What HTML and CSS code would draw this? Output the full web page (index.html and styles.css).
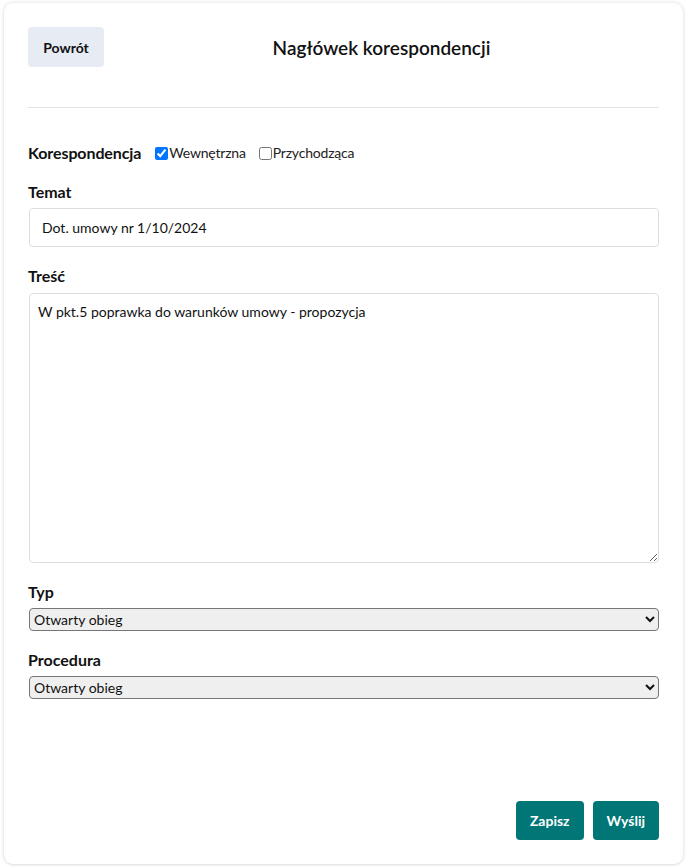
FILE: index.html
```html
<!DOCTYPE html>
<html lang="pl">
<head>
<meta charset="utf-8">
<title>Nagłówek korespondencji</title>
<link rel="stylesheet" href="styles.css">
</head>
<body>
<div class="card">
  <header class="header">
    <button class="back-btn" type="button">Powrót</button>
    <h1 class="title">Nagłówek korespondencji</h1>
  </header>

  <div class="kind-row">
    <span class="label">Korespondencja</span>
    <label class="check"><input type="checkbox" checked>Wewnętrzna</label>
    <label class="check"><input type="checkbox">Przychodząca</label>
  </div>

  <div class="field">
    <label class="label">Temat</label>
    <input class="text-input" type="text" value="Dot. umowy nr 1/10/2024">
  </div>

  <div class="field">
    <label class="label">Treść</label>
    <textarea class="text-area">W pkt.5 poprawka do warunków umowy - propozycja</textarea>
  </div>

  <div class="field">
    <label class="label">Typ</label>
    <select class="select"><option>Otwarty obieg</option></select>
  </div>

  <div class="field">
    <label class="label">Procedura</label>
    <select class="select"><option>Otwarty obieg</option></select>
  </div>

  <footer class="footer">
    <button class="primary-btn" type="button">Zapisz</button>
    <button class="primary-btn" type="button">Wyślij</button>
  </footer>
</div>
</body>
</html>
```

FILE: styles.css
```css
* { box-sizing: border-box; }

html, body {
  margin: 0;
  padding: 0;
  background: #ffffff;
}

body {
  font-family: Lato, "Open Sans", sans-serif;
  color: #111111;
  padding: 3px 7px 3px 4px;
}

.card {
  height: 861px;
  background: #ffffff;
  border-radius: 9px;
  box-shadow: 0 0 4px rgba(0, 0, 0, 0.14), 0 1px 2px rgba(0, 0, 0, 0.06);
  padding: 24px 24px 24px 24px;
  display: flex;
  flex-direction: column;
}

.header {
  display: flex;
  align-items: center;
  padding-bottom: 40px;
  border-bottom: 1px solid #e3e3e3;
}

.back-btn {
  width: 76px;
  height: 40px;
  border: none;
  border-radius: 4px;
  background: #e6ebf4;
  font-family: inherit;
  font-size: 14px;
  font-weight: 700;
  color: #111111;
  padding: 0;
}

.title {
  flex: 1;
  margin: 0;
  text-align: center;
  font-size: 19px;
  font-weight: 600;
  color: #111111;
}

.kind-row {
  display: flex;
  align-items: center;
  margin-top: 35px;
  line-height: 20px;
}

.kind-row .label {
  margin-right: 11px;
  letter-spacing: -0.1px;
}

.check {
  display: flex;
  align-items: center;
  font-size: 14px;
  margin-right: 10px;
  color: #222222;
  letter-spacing: -0.2px;
}

.check input {
  margin: 0 1px 0 3px;
  width: 13px;
  height: 13px;
}

.label {
  font-size: 16px;
  font-weight: 700;
  line-height: 20px;
  color: #111111;
}

.field {
  display: flex;
  flex-direction: column;
  gap: 6px;
  margin-top: 19px;
}

.text-input,
.text-area,
.select {
  margin-left: 1px;
}

.text-input {
  height: 39px;
  border: 1px solid #dedede;
  border-radius: 4px;
  padding: 0 12px;
  font-family: inherit;
  font-size: 14px;
  color: #111111;
  background: #ffffff;
}

.text-area {
  height: 270px;
  border: 1px solid #dedede;
  border-radius: 4px;
  padding: 9px 8px;
  font-family: inherit;
  font-size: 14px;
  color: #111111;
  resize: both;
  margin-top: 1px;
}

.select {
  height: 23px;
  font-family: inherit;
  font-size: 14px;
  color: #111111;
  border-radius: 4px;
}

.footer {
  margin-top: auto;
  display: flex;
  justify-content: flex-end;
  gap: 9px;
}

.primary-btn {
  height: 39px;
  border: none;
  border-radius: 4px;
  background: #007676;
  color: #ffffff;
  font-family: inherit;
  font-size: 14px;
  font-weight: 700;
  padding: 0 14px;
}
```
